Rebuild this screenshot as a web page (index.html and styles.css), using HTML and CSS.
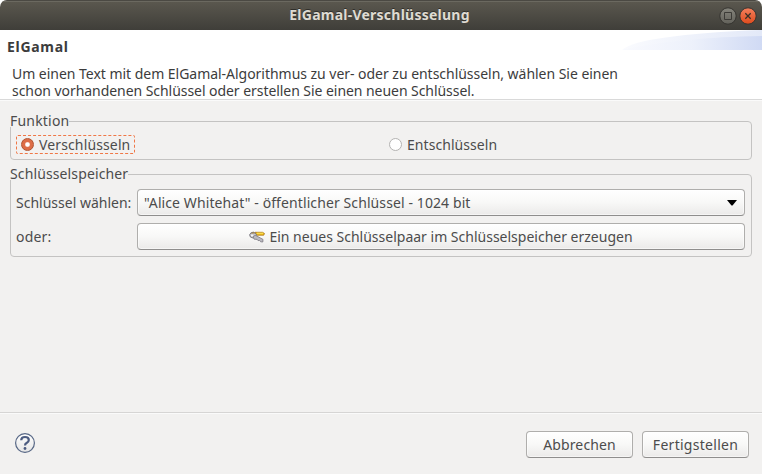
FILE: index.html
```html
<!DOCTYPE html>
<html lang="de">
<head>
<meta charset="utf-8">
<title>ElGamal-Verschlüsselung</title>
<link rel="stylesheet" href="styles.css">
</head>
<body>
<div class="window">
  <div class="titlebar">
    <span class="title">ElGamal-Verschlüsselung</span>
    <svg class="controls" width="38" height="20" viewBox="0 0 38 20">
      <defs>
        <linearGradient id="gray" x2="0" y2="1"><stop stop-color="#85847c"/><stop offset="1" stop-color="#62615a"/></linearGradient>
        <linearGradient id="red" x2="0" y2="1"><stop stop-color="#f5805d"/><stop offset="1" stop-color="#dd4a1c"/></linearGradient>
      </defs>
      <circle cx="9" cy="10" r="8.200" fill="url(#gray)" stroke="#353430"/>
      <path d="M5.500 6.500h7v7h-7z" fill="none" stroke="#3c3b37"/>
      <circle cx="29" cy="10" r="8.200" fill="url(#red)" stroke="#353430"/>
      <path d="M26.300 7.300l5.400 5.400M31.700 7.300l-5.400 5.400" stroke="#3c3026" stroke-width="1.300"/>
    </svg>
  </div>
  <header class="header">
    <svg class="banner" width="140" height="20" viewBox="0 0 140 20">
      <defs>
        <linearGradient id="swoosh"><stop stop-color="#f9fafe"/><stop offset=".5" stop-color="#edf1fb"/><stop offset="1" stop-color="#d0daf4"/></linearGradient>
        <linearGradient id="swooshTop"><stop stop-color="#fafbfe"/><stop offset="1" stop-color="#e3e9f8"/></linearGradient>
      </defs>
      <path d="M0 20C10 10 60 3 140 0V20z" fill="url(#swooshTop)"/>
      <path d="M0 20C40 11 85 7 140 6V20z" fill="url(#swoosh)"/>
    </svg>
    <h1 class="heading">ElGamal</h1>
    <p class="desc"><span class="desc-a">Um einen Text mit dem ElGamal-Algorithmus zu ver- oder zu entschlüsseln, wählen Sie einen</span><br><span class="desc-b">schon vorhandenen Schlüssel oder erstellen Sie einen neuen Schlüssel.</span></p>
  </header>
  <main class="content">
    <fieldset class="group function">
      <legend><span class="t-funktion">Funktion</span></legend>
      <div class="radios">
        <div class="cell"><label class="radio focused"><i class="dot on"></i><span class="t-ver">Verschlüsseln</span></label></div>
        <div class="cell"><label class="radio"><i class="dot"></i><span class="t-ent">Entschlüsseln</span></label></div>
      </div>
    </fieldset>
    <fieldset class="group store">
      <legend><span class="t-store">Schlüsselspeicher</span></legend>
      <div class="form">
        <span class="t-choose">Schlüssel wählen:</span>
        <div class="button combo"><span class="t-combo">"Alice Whitehat" - öffentlicher Schlüssel - 1024 bit</span>
          <svg width="10" height="6" viewBox="0 0 10 6"><path d="M0 0h10L5.5 5.4h-1z" fill="#000"/></svg>
        </div>
        <span class="t-or">oder:</span>
        <div class="button generate">
          <svg width="16" height="12" viewBox="0 0 16 12">
            <path d="M6 1.300h7.500l2 1.200-.8 1.700H7.500z" fill="#f5c51c" stroke="#a8741c" stroke-width=".8"/>
            <path d="M8 2.200h6" stroke="#ffed78" stroke-width=".8"/>
            <path d="M.6 3.800Q1.500.8 5 1.100L7.500 3.600Q6.500 7.200 4 7 .6 6.700.6 3.800z" fill="#c6c6ce" stroke="#77747a" stroke-width=".9"/>
            <path d="M2.500 2.500Q4 1.200 5.500 2.300" stroke="#a17a32" fill="none"/>
            <path d="M4 6L6.200 4.200 14 8.400 13.800 11 11.700 10.800 10.600 9.400 9 9.600 8.200 8.400 5.200 8.200z" fill="#bbbac2" stroke="#7b7980" stroke-width=".8"/>
            <circle cx="3" cy="4.400" r=".9" fill="#fff"/>
          </svg>
          <span class="t-gen">Ein neues Schlüsselpaar im Schlüsselspeicher erzeugen</span>
        </div>
      </div>
    </fieldset>
  </main>
  <footer class="footer">
    <svg class="help" width="22" height="22" viewBox="0 0 22 22">
      <defs><linearGradient id="helpFill" x2="0" y2="1"><stop stop-color="#fff"/><stop offset="1" stop-color="#e5e5e5"/></linearGradient></defs>
      <circle cx="11" cy="11" r="9.400" fill="url(#helpFill)" stroke="#576785" stroke-width="1.200"/>
      <path d="M7.200 8.200Q7.300 5 11 5q3.800 0 3.800 3 0 1.700-1.900 2.800Q11 11.800 11 13.500" fill="none" stroke="#4c5c81" stroke-width="2.200"/>
      <circle cx="11" cy="16.500" r="1.400" fill="#4c5c81"/>
    </svg>
    <div class="button action"><span class="t-cancel">Abbrechen</span></div>
    <div class="button action"><span class="t-finish">Fertigstellen</span></div>
  </footer>
</div>
</body>
</html>
```
FILE: styles.css
```css
* { box-sizing: border-box; }
body { margin: 0; background: #fff; font: 14px/17px "Noto Sans", sans-serif; color: #4c4c4c; }
.window { width: 762px; height: 474px; display: flex; flex-direction: column; background: #f2f1f0; border-radius: 7px 7px 0 0; overflow: hidden; }
.titlebar { height: 30px; flex: none; display: grid; grid-template-columns: 1fr auto 1fr; align-items: center; background: linear-gradient(#5b584f, #3f3e39); border-top: 1px solid #4b4943; box-shadow: inset 0 1px #6b6960; color: #dfdbd2; font-weight: 700; text-shadow: 0 -1px #302f2b; }
.title { grid-column: 2; margin: -2px 3px 0 0; letter-spacing: .24px; white-space: nowrap; }
.controls { justify-self: end; margin-right: 5px; }
.header { height: 70px; flex: none; position: relative; background: #fff; border-bottom: 1px solid #d9d9d9; color: #3c3c3c; }
.banner { position: absolute; right: 0; top: 0; }
.heading { margin: 0; padding: 8px 0 0 7px; font-size: 14px; line-height: 17px; font-weight: 700; letter-spacing: .7px; }
.desc { margin: 10px 0 0 12px; white-space: nowrap; }
.desc-a { letter-spacing: -.03px; }
.desc-b { letter-spacing: -.055px; }
.content { flex: 1; padding: 15px 10px 0; display: flex; flex-direction: column; border-top: 1px solid #fafafa; }
.group { min-width: 0; margin: 0; padding: 0; border: 1px solid #c4c3c2; border-radius: 4px; white-space: nowrap; }
.group legend { margin-left: -1px; padding: 0; height: 11px; line-height: 9px; background: #f2f1f0; }
.function { height: 44px; }
.store { height: 88px; margin-top: 9px; }
.radios { display: grid; grid-template-columns: 368px 1fr; padding: 8px 0 0 5px; }
.radio { display: inline-flex; align-items: center; height: 19px; padding: 0 4px; gap: 4px; border: 1px solid transparent; border-radius: 2px; }
.cell { display: flex; }
.focused { border: 1px dashed #f07746; }
.dot { width: 13px; height: 13px; margin-top: -1px; border: 1px solid #b4b3b2; border-radius: 50%; background: #fff; }
.dot.on { border-color: #b1532f; background: radial-gradient(circle, #fff 0 1.7px, #dd6d47 3px); }
.t-ver, .t-ent { margin-left: 1px; }
.t-funktion { letter-spacing: .2px; }
.t-store { letter-spacing: .12px; }
.t-ver { letter-spacing: .13px; }
.t-ent { letter-spacing: .06px; }
.t-combo { letter-spacing: .1px; }
.t-or { letter-spacing: .2px; }
.t-cancel { letter-spacing: .13px; }
.t-finish { letter-spacing: .28px; }
.form { display: grid; grid-template-columns: 121px 608px; grid-template-rows: 27px 27px; row-gap: 7px; align-items: center; padding: 9px 0 0 5px; }
.button { height: 27px; display: flex; align-items: center; border: 1px solid #afaeac; border-bottom-color: #8f8e8d; border-radius: 4px; background: linear-gradient(#fff, #f8f8f7 50%, #ebeae9); box-shadow: inset 0 0 0 1px rgba(255,255,255,.5); white-space: nowrap; }
.combo { justify-content: space-between; padding: 0 7px 0 6px; }
.generate { justify-content: center; gap: 4px; }
.footer { height: 62px; flex: none; display: flex; gap: 9px; padding: 18px 13px 0 14px; border-top: 1px solid #d6d5d4; box-shadow: inset 0 1px #fafafa; }
.help { margin: 1px auto 0 0; }
.action { width: 107px; justify-content: center; }
```
